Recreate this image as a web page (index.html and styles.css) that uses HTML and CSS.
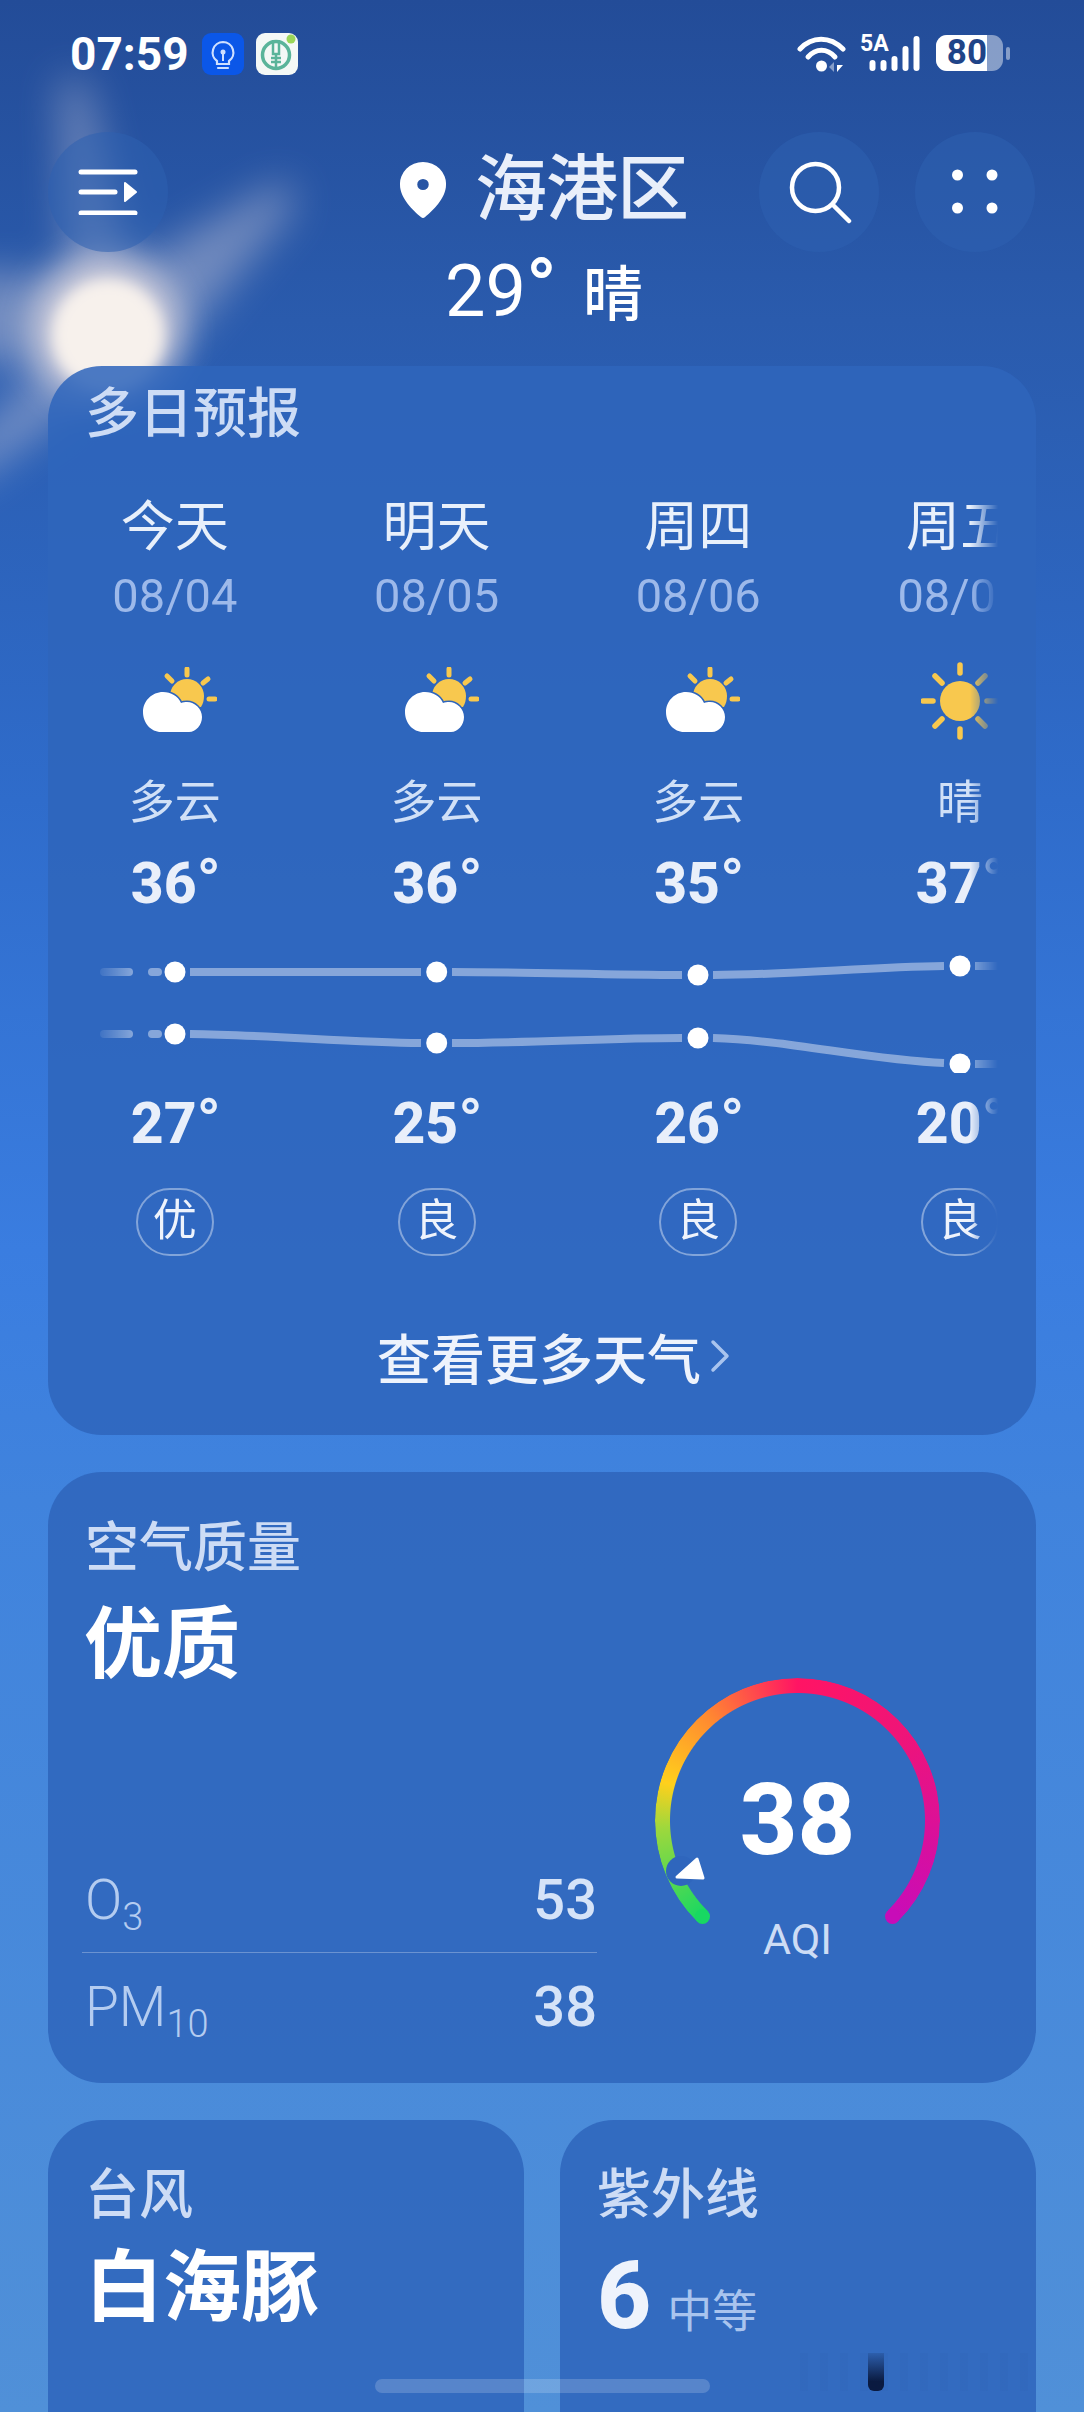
FILE: index.html
```html
<!DOCTYPE html>
<html lang="zh-CN">
<head>
    <meta charset="UTF-8">
    <meta name="viewport" content="width=device-width, initial-scale=1.0">
    <title>天气</title>
    <link rel="stylesheet" href="styles.css">
</head>
<body>
    <svg class="defs" width="0" height="0">
        <defs>
            <symbol id="partly" viewBox="0 0 74 66">
                <g stroke="#f8c84e" stroke-width="5" stroke-linecap="round">
                    <line x1="44" y1="2" x2="44" y2="8"/>
                    <line x1="24" y1="9" x2="29" y2="14"/>
                    <line x1="60" y1="16" x2="65" y2="12"/>
                    <line x1="66" y1="32" x2="72" y2="32"/>
                </g>
                <path d="M27 29a17 17 0 0 1 34 0c0 4-1 8-3 11H30c-2-3-3-7-3-11z" fill="#f8c84e"/>
                <path d="M18 65C8 65 0 56 0 45C0 34 9 25 20 25C28 25 35 29 38 36C40 35 42 35 44 35C52 35 59 42 59 50C59 58 53 65 46 65Z" fill="#fff" stroke="#2e65bc" stroke-width="3" paint-order="stroke"/>
            </symbol>
            <symbol id="sunny" viewBox="0 0 78 78">
                <circle cx="39" cy="39" r="20" fill="#f8c84e"/>
                <g stroke="#f8c84e" stroke-width="5.500" stroke-linecap="round">
                    <line x1="39" y1="3" x2="39" y2="11"/>
                    <line x1="39" y1="67" x2="39" y2="75"/>
                    <line x1="2" y1="39" x2="12" y2="39"/>
                    <line x1="66" y1="39" x2="76" y2="39"/>
                    <line x1="14" y1="14" x2="21" y2="21"/>
                    <line x1="64" y1="14" x2="57" y2="21"/>
                    <line x1="14" y1="64" x2="21" y2="57"/>
                    <line x1="64" y1="64" x2="57" y2="57"/>
                </g>
            </symbol>
        </defs>
    </svg>

    <!-- sun behind everything -->
    <svg class="sun" width="420" height="520" viewBox="0 0 420 520">
        <defs>
            <filter id="soft" x="-40%" y="-40%" width="180%" height="180%"><feGaussianBlur stdDeviation="20"/></filter>
            <filter id="mid" x="-40%" y="-40%" width="180%" height="180%"><feGaussianBlur stdDeviation="16"/></filter>
            <filter id="tight" x="-30%" y="-30%" width="160%" height="160%"><feGaussianBlur stdDeviation="7"/></filter>
        </defs>
        <g filter="url(#soft)" fill="#d8d2dc" opacity=".42">
            <polygon points="60,80 85,80 140,320 70,320"/>
            <polygon points="285,180 295,205 150,380 90,290"/>
            <polygon points="-40,270 110,280 110,370 -40,360"/>
            <polygon points="-40,450 90,320 130,370 -40,490"/>
        </g>
        <circle cx="106" cy="330" r="76" fill="#e6dee2" opacity=".72" filter="url(#mid)"/>
        <circle cx="108" cy="335" r="56" fill="#f7f1ec" filter="url(#tight)"/>
    </svg>

    <header class="status">
        <div class="status-left">
            <span class="clock">07:59</span>
            <svg class="app-icon" width="42" height="42" viewBox="0 0 42 42">
                <rect width="42" height="42" rx="9" fill="#0b57e8"/>
                <path d="M21 9a10.500 10.500 0 0 0-6 19v3h12v-3a10.500 10.500 0 0 0-6-19z" fill="none" stroke="#cfe0ff" stroke-width="2.200"/>
                <path d="M16 35h10" stroke="#cfe0ff" stroke-width="2.200" stroke-linecap="round"/>
                <circle cx="21" cy="19" r="2.500" fill="#cfe0ff"/>
                <path d="M21 20v8" stroke="#cfe0ff" stroke-width="2"/>
            </svg>
            <svg class="app-icon" width="42" height="42" viewBox="0 0 42 42">
                <rect width="42" height="42" rx="9" fill="#f4f8f6"/>
                <circle cx="20" cy="22" r="13.500" fill="none" stroke="#5ab49a" stroke-width="3.500"/>
                <path d="M17 7v14h6V7M20 21v14M15 25h10M15 29h10" fill="none" stroke="#5ab49a" stroke-width="2.500"/>
                <circle cx="35" cy="6" r="4.500" fill="#9ad65a"/>
            </svg>
        </div>
        <div class="status-right">
            <svg width="50" height="38" viewBox="0 0 50 38">
                <g fill="none" stroke="#fff" stroke-width="5" stroke-linecap="round">
                    <path d="M3 14C15 1 33 1 46 14"/>
                    <path d="M11 22C19 13 30 13 38 22"/>
                </g>
                <circle cx="24.500" cy="31" r="5.500" fill="#fff"/>
                <path d="M37 27v10l-5-5z" fill="#fff" opacity=".45"/>
                <path d="M40 27v10l6-7h-6z" fill="#fff"/>
            </svg>
            <span class="net">
                <span class="net-label">5A</span>
                <svg width="52" height="38" viewBox="0 0 52 38">
                    <g fill="none" stroke="#fff" stroke-width="6" stroke-linecap="round">
                        <line x1="3.500" y1="28" x2="3.500" y2="33"/>
                        <line x1="14.500" y1="28" x2="14.500" y2="33"/>
                        <line x1="25.500" y1="24" x2="25.500" y2="33"/>
                        <line x1="36.500" y1="14" x2="36.500" y2="33"/>
                        <line x1="47.500" y1="4" x2="47.500" y2="33"/>
                    </g>
                </svg>
            </span>
            <span class="battery"><span class="battery-fill">80</span></span>
            <span class="battery-nub"></span>
        </div>
    </header>

    <section class="hero">
        <button class="round-btn">
            <svg width="60" height="46" viewBox="0 0 60 46">
                <g stroke="#fff" stroke-width="5" stroke-linecap="round">
                    <line x1="3" y1="3" x2="57" y2="3"/>
                    <line x1="3" y1="23" x2="37" y2="23"/>
                    <line x1="3" y1="44" x2="57" y2="44"/>
                </g>
                <path d="M47 14l11 9-11 9z" fill="#fff" stroke="#fff" stroke-width="2" stroke-linejoin="round"/>
            </svg>
        </button>
        <div class="place">
            <div class="place-name">
                <svg width="46" height="56" viewBox="0 0 44 56" preserveAspectRatio="none">
                    <path fill-rule="evenodd" d="M22 0a22 22 0 0 1 22 23c0 13-13 26-20 32a3 3 0 0 1-4 0C13 49 0 36 0 23A22 22 0 0 1 22 0zm0 17a5.500 5.500 0 1 0 0 11a5.500 5.500 0 0 0 0-11z" fill="#fff"/>
                </svg>
                <h1>海港区</h1>
            </div>
            <div class="place-temp">29<span class="deg">°</span><span class="place-sky">晴</span></div>
        </div>
        <div class="hero-btns">
            <button class="round-btn">
                <svg width="66" height="66" viewBox="0 0 66 66">
                    <circle cx="29.500" cy="28.500" r="23.500" fill="none" stroke="#fff" stroke-width="4.500"/>
                    <line x1="48" y1="47" x2="63" y2="62" stroke="#fff" stroke-width="4.500" stroke-linecap="round"/>
                </svg>
            </button>
            <button class="round-btn">
                <svg width="46" height="46" viewBox="0 0 46 46" fill="#fff">
                    <circle cx="5.500" cy="6" r="5.500"/><circle cx="40" cy="6" r="5.500"/>
                    <circle cx="5.500" cy="39" r="5.500"/><circle cx="40" cy="39" r="5.500"/>
                </svg>
            </button>
        </div>
    </section>

    <main class="cards">
        <section class="card forecast">
            <h2 class="card-title">多日预报</h2>
            <div class="strip">
                <div class="days">
                    <div class="day">
                        <div class="day-name">今天</div>
                        <div class="day-date">08/04</div>
                        <svg class="day-icon"><use href="#partly"/></svg>
                        <div class="day-sky">多云</div>
                        <div class="day-temp">36<span class="deg">°</span></div>
                    </div>
                    <div class="day">
                        <div class="day-name">明天</div>
                        <div class="day-date">08/05</div>
                        <svg class="day-icon"><use href="#partly"/></svg>
                        <div class="day-sky">多云</div>
                        <div class="day-temp">36<span class="deg">°</span></div>
                    </div>
                    <div class="day">
                        <div class="day-name">周四</div>
                        <div class="day-date">08/06</div>
                        <svg class="day-icon"><use href="#partly"/></svg>
                        <div class="day-sky">多云</div>
                        <div class="day-temp">35<span class="deg">°</span></div>
                    </div>
                    <div class="day">
                        <div class="day-name">周五</div>
                        <div class="day-date">08/07</div>
                        <svg class="day-icon day-icon-sun"><use href="#sunny"/></svg>
                        <div class="day-sky">晴</div>
                        <div class="day-temp">37<span class="deg">°</span></div>
                    </div>
                </div>

                <svg class="chart" width="950" height="120" viewBox="0 0 950 120">
                    <defs>
                        <linearGradient id="dash"><stop offset="0" stop-color="#fff" stop-opacity=".08"/><stop offset="1" stop-color="#fff" stop-opacity=".42"/></linearGradient>
                    </defs>
                    <g fill="none" stroke="#fff" stroke-opacity=".42" stroke-width="8">
                        <path d="M142 19H373"/>
                        <path d="M404 19C480 19 560 22 634 22"/>
                        <path d="M665 22C740 22 820 14 896 13"/>
                        <path d="M927 13H950"/>
                        <path d="M142 81C220 82 300 89 373 90"/>
                        <path d="M404 90C480 90 560 85 634 85"/>
                        <path d="M665 85C740 87 820 107 896 110"/>
                        <path d="M927 111H950"/>
                    </g>
                    <rect x="52" y="15" width="33" height="8" rx="4" fill="url(#dash)"/>
                    <rect x="52" y="77" width="33" height="8" rx="4" fill="url(#dash)"/>
                    <path d="M104 19H110M104 81H110" fill="none" stroke="#fff" stroke-opacity=".42" stroke-width="8" stroke-linecap="round"/>
                    <g fill="#fff">
                        <circle cx="127" cy="19" r="10.500"/><circle cx="388.700" cy="19" r="10.500"/>
                        <circle cx="650" cy="22" r="10.500"/><circle cx="912" cy="13" r="10.500"/>
                        <circle cx="127" cy="81" r="10.500"/><circle cx="388.700" cy="90" r="10.500"/>
                        <circle cx="650" cy="85" r="10.500"/><circle cx="912" cy="111" r="10.500"/>
                    </g>
                </svg>

                <div class="days">
                    <div class="day">
                        <div class="day-temp day-temp-low">27<span class="deg">°</span></div>
                        <div class="aqi-tag">优</div>
                    </div>
                    <div class="day">
                        <div class="day-temp day-temp-low">25<span class="deg">°</span></div>
                        <div class="aqi-tag">良</div>
                    </div>
                    <div class="day">
                        <div class="day-temp day-temp-low">26<span class="deg">°</span></div>
                        <div class="aqi-tag">良</div>
                    </div>
                    <div class="day">
                        <div class="day-temp day-temp-low">20<span class="deg">°</span></div>
                        <div class="aqi-tag">良</div>
                    </div>
                </div>
            </div>
            <a class="more">查看更多天气
                <svg width="20" height="34" viewBox="0 0 20 34"><path d="M3 3l14 14L3 31" fill="none" stroke="#a9c4ee" stroke-width="3.500" stroke-linecap="round" stroke-linejoin="round"/></svg>
            </a>
        </section>

        <section class="card air">
            <div class="air-info">
                <h2 class="card-title">空气质量</h2>
                <div class="air-level">优质</div>
                <div class="air-rows">
                    <div class="air-row air-row-first">
                        <span class="air-name">O<sub>3</sub></span>
                        <span class="air-val">53</span>
                    </div>
                    <div class="air-row">
                        <span class="air-name">PM<sub>10</sub></span>
                        <span class="air-val">38</span>
                    </div>
                </div>
            </div>
            <div class="gauge">
                <div class="gauge-ring"></div>
                <span class="gauge-cap gauge-cap-start"></span>
                <span class="gauge-cap gauge-cap-end"></span>
                <svg class="gauge-mark" width="60" height="60" viewBox="0 0 60 60">
                    <circle cx="24" cy="30" r="15" fill="#2f66bd"/>
                    <path d="M20 36L40 18L46 37Z" fill="#fff" stroke="#fff" stroke-width="3" stroke-linejoin="round"/>
                </svg>
                <span class="gauge-num">38</span>
                <span class="gauge-label">AQI</span>
            </div>
        </section>

        <div class="pair">
            <section class="card small">
                <h2 class="card-title">台风</h2>
                <div class="small-value">白海豚</div>
            </section>
            <section class="card small">
                <h2 class="card-title">紫外线</h2>
                <div class="uv"><span class="uv-num">6</span><span class="uv-text">中等</span></div>
            </section>
        </div>
    </main>

    <div class="home-bar"></div>
    <div class="mark-smudge"><span class="mark-bar"></span></div>
</body>
</html>
```

FILE: styles.css
```css
*{
    margin: 0;
    padding: 0;
    box-sizing: border-box;
}

body{
    position: relative;
    width: 1084px;
    height: 2412px;
    overflow: hidden;
    font-family: Roboto, "Noto Sans CJK SC", sans-serif;
    color: #fff;
    background: linear-gradient(180deg, #234c98 0, #2a5bad 320px, #2f6ccb 800px, #3a7de0 1250px, #4083dd 1500px, #5090d8 2412px);
}

.defs{
    position: absolute;
}

.sun{
    position: absolute;
    left: 0;
    top: 0;
}

.deg{
    font-size: 1.12em;
    line-height: 0;
    font-weight: 500;
}

/* status bar */
.status{
    position: relative;
    height: 108px;
    padding: 33px 74px 0 70px;
    display: flex;
    justify-content: space-between;
}

.status-left{
    display: flex;
    align-items: flex-start;
    gap: 12px;
}

.clock{
    font-size: 46px;
    line-height: 42px;
    font-weight: 700;
    margin-right: 1px;
}

.status-right{
    display: flex;
    align-items: flex-start;
    padding-top: 2px;
}

.net{
    position: relative;
    width: 61px;
    margin-left: 13px;
    height: 38px;
    display: flex;
    justify-content: flex-end;
}

.net-label{
    position: absolute;
    left: 0;
    top: -3px;
    font-size: 23px;
    line-height: 24px;
    font-weight: 700;
}

.battery{
    margin-left: 15px;
    width: 67px;
    height: 36px;
    border-radius: 11px;
    background: rgba(255, 255, 255, .45);
    overflow: hidden;
}

.battery-fill{
    display: block;
    width: 51px;
    height: 36px;
    background: #fff;
    color: #1f4488;
    font-size: 35px;
    line-height: 36px;
    font-weight: 700;
    text-align: right;
}

.battery-nub{
    width: 4px;
    height: 13px;
    margin: 12px 0 0 3px;
    border-radius: 2px;
    background: rgba(255, 255, 255, .45);
}

/* top area with place name */
.hero{
    position: relative;
    height: 258px;
    padding: 24px 49px 0 48px;
    display: grid;
    grid-template-columns: 1fr auto 1fr;
    align-items: start;
}

.hero-btns{
    display: flex;
    justify-content: flex-end;
    gap: 36px;
}

.round-btn{
    width: 120px;
    height: 120px;
    border: 0;
    border-radius: 50%;
    background: rgba(46, 96, 176, .55);
    display: flex;
    align-items: center;
    justify-content: center;
}

.place{
    padding-left: 5px;
}

.place-name{
    height: 116px;
    display: flex;
    align-items: center;
    justify-content: center;
    gap: 29px;
}

.place-name h1{
    font-size: 72px;
    line-height: 116px;
    font-weight: 500;
    color: #e9effa;
    letter-spacing: -1px;
}

.place-temp{
    margin-top: 2px;
    font-size: 72px;
    line-height: 84px;
    text-align: center;
}

.place-sky{
    margin-left: 26px;
    font-size: 60px;
    font-weight: 500;
}

/* cards */
.cards{
    position: relative;
    padding: 0 48px;
    display: flex;
    flex-direction: column;
    gap: 37px;
}

.card{
    border-radius: 54px;
    background: rgba(46, 101, 188, .86);
}

.card-title{
    font-size: 54px;
    line-height: 92px;
    font-weight: 500;
    color: #cddcf5;
}

.forecast{
    height: 1069px;
    padding-top: 3px;
}

.forecast > .card-title{
    padding-left: 37px;
}

.strip{
    width: 950px;
    margin-top: 36px;
    overflow: hidden;
    -webkit-mask-image: linear-gradient(to right, #000 922px, transparent 950px);
    mask-image: linear-gradient(to right, #000 922px, transparent 950px);
}

.days{
    display: grid;
    grid-template-columns: repeat(4, 261.7px);
    margin-left: -4px;
}

.day{
    display: flex;
    flex-direction: column;
    align-items: center;
}

.day-name{
    font-size: 54px;
    line-height: 62px;
    color: #e8f0fb;
}

.day-date{
    margin-top: 6px;
    font-size: 47px;
    line-height: 62px;
    font-weight: 400;
    color: #9db9ea;
}

.day-icon{
    margin: 40px 0 0 10px;
    width: 74px;
    height: 66px;
}

.day-icon-sun{
    width: 78px;
    height: 78px;
    margin: 35px 0 -7px 0;
}

.day-sky{
    margin-top: 39px;
    font-size: 46px;
    line-height: 60px;
    color: #d0e0f7;
}

.day-temp{
    margin-top: 22px;
    font-size: 57px;
    line-height: 60px;
    font-weight: 800;
    color: #e9effa;
    padding-left: 2px;
}

.day-temp-low{
    margin-top: 21px;
}

.chart{
    display: block;
    margin-top: 39px;
}

.aqi-tag{
    margin-top: 34px;
    width: 78px;
    height: 68px;
    border: 2px solid rgba(255, 255, 255, .4);
    border-radius: 34px;
    font-size: 44px;
    line-height: 62px;
    text-align: center;
    color: #eef3fc;
}

.more{
    margin-top: 65px;
    height: 70px;
    display: flex;
    align-items: center;
    justify-content: center;
    gap: 9px;
    font-size: 54px;
    font-weight: 500;
    color: #eef3fc;
    padding-left: 23px;
}

.air{
    height: 611px;
    padding: 31px 0 0 34px;
    display: flex;
}

.air-info{
    width: 515px;
}

.air-info > .card-title{
    padding-left: 3px;
}

.air-level{
    padding-left: 2px;
    margin-top: 1px;
    font-size: 78px;
    line-height: 100px;
    font-weight: 700;
}

.air-rows{
    margin-top: 158px;
}

.air-row{
    display: flex;
    justify-content: space-between;
    align-items: baseline;
    height: 106px;
    padding: 24px 0 0 3px;
    line-height: 60px;
}

.air-row-first{
    height: 99px;
    padding-top: 16px;
    border-bottom: 1px solid rgba(255, 255, 255, .28);
}

.air-name{
    font-size: 55px;
    font-weight: 300;
    color: #b4ccf0;
}

.air-name sub{
    font-size: 38px;
    line-height: 0;
    vertical-align: -11px;
}

.air-val{
    font-size: 56px;
    font-weight: 500;
    color: #d5e3f8;
}

.gauge{
    position: relative;
    width: 285px;
    height: 285px;
    margin: 175px 0 0 58px;
}

.gauge-ring{
    width: 100%;
    height: 100%;
    border-radius: 50%;
    background: conic-gradient(from 225deg, #18d862 0, #9fd83c 42deg, #ffd01c 61deg, #ff8a30 94deg, #ff1464 135deg, #ef1478 185deg, #c80cb8 270deg, transparent 270deg);
    -webkit-mask-image: radial-gradient(circle, transparent 127px, #000 128px);
    mask-image: radial-gradient(circle, transparent 127px, #000 128px);
}

.gauge-cap{
    position: absolute;
    width: 15px;
    height: 15px;
    border-radius: 50%;
    top: 231px;
}

.gauge-cap-start{
    left: 40px;
    background: #18d862;
}

.gauge-cap-end{
    left: 230px;
    background: #c80cb8;
}

.gauge-mark{
    position: absolute;
    left: 2px;
    top: 163px;
}

.gauge-num{
    position: absolute;
    left: 0;
    right: 0;
    top: 84px;
    font-size: 100px;
    line-height: 116px;
    font-weight: 800;
    text-align: center;
}

.gauge-label{
    position: absolute;
    left: 0;
    right: 0;
    top: 237px;
    font-size: 43px;
    line-height: 48px;
    font-weight: 400;
    text-align: center;
    color: #cddcf5;
}

.pair{
    display: grid;
    grid-template-columns: 476px 476px;
    gap: 36px;
}

.small{
    height: 400px;
    padding: 30px 0 0 37px;
}

.small-value{
    margin-top: -3px;
    font-size: 78px;
    line-height: 100px;
    font-weight: 700;
}

.uv{
    display: flex;
    align-items: baseline;
    gap: 16px;
    margin-top: -4px;
    line-height: 116px;
}

.uv-num{
    font-size: 94px;
    font-weight: 800;
    color: #eef3fc;
}

.uv-text{
    font-size: 45px;
    color: #a9c4ee;
}

.home-bar{
    position: absolute;
    left: 375px;
    bottom: 19px;
    width: 335px;
    height: 14px;
    border-radius: 7px;
    background: rgba(255, 255, 255, .18);
}

/* blurred watermark at the bottom right */
.mark-smudge{
    position: absolute;
    left: 800px;
    top: 2353px;
    width: 236px;
    height: 38px;
    background: repeating-linear-gradient(90deg, rgba(20, 50, 110, .035) 0, rgba(20, 50, 110, .035) 8px, transparent 8px, transparent 20px);
}

.mark-bar{
    display: block;
    width: 16px;
    height: 38px;
    margin-left: 68px;
    border-radius: 0 0 6px 6px;
    background: linear-gradient(180deg, rgba(10, 26, 64, .15), #0a1a40 75%);
}
```
